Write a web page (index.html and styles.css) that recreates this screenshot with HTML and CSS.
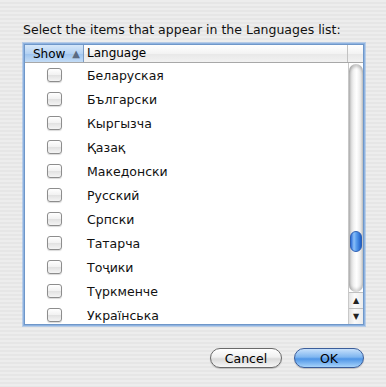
FILE: index.html
```html
<!DOCTYPE html>
<html lang="ru">
  <head>
    <meta charset="UTF-8" />
    <meta name="viewport" content="width=device-width, initial-scale=1.0" />
    <title>Languages</title>
    <link rel="stylesheet" href="styles.css">
  </head>
  <body>
    <div class="dialog">
      <p class="prompt">Select the items that appear in the Languages list:</p>

      <div class="table">
        <div class="table-head">
          <div class="col-show sorted">Show <span class="sort-arrow">▲</span></div>
          <div class="col-lang">Language</div>
          <div class="col-corner"></div>
        </div>

        <div class="table-body">
          <ul class="rows">
            <li><span class="check"></span><span class="name">Беларуская</span></li>
            <li><span class="check"></span><span class="name">Български</span></li>
            <li><span class="check"></span><span class="name">Кыргызча</span></li>
            <li><span class="check"></span><span class="name">Қазақ</span></li>
            <li><span class="check"></span><span class="name">Македонски</span></li>
            <li><span class="check"></span><span class="name">Русский</span></li>
            <li><span class="check"></span><span class="name">Српски</span></li>
            <li><span class="check"></span><span class="name">Татарча</span></li>
            <li><span class="check"></span><span class="name">Тоҷики</span></li>
            <li><span class="check"></span><span class="name">Түркменче</span></li>
            <li><span class="check"></span><span class="name">Українська</span></li>
          </ul>

          <div class="scrollbar">
            <div class="track">
              <div class="thumb"></div>
            </div>
            <div class="step up">▲</div>
            <div class="step down">▼</div>
          </div>
        </div>
      </div>

      <div class="buttons">
        <button class="btn">Cancel</button>
        <button class="btn default">OK</button>
      </div>
    </div>
  </body>
</html>
```

FILE: styles.css
```css
body {
  margin: 0;
  width: 386px;
  height: 387px;
  overflow: hidden;
  font-family: "DejaVu Sans", "Liberation Sans", sans-serif;
  font-size: 12px;
  color: #000;
  background: repeating-linear-gradient(
    to bottom,
    #ededed 0,
    #ededed 2px,
    #e6e6e6 2px,
    #e6e6e6 4px
  );
}

.dialog {
  padding: 22px 22px 0 24px;
}

.prompt {
  margin: 0 0 6px -1px;
  height: 16px;
  line-height: 16px;
  font-size: 12.5px;
  color: #111;
}

/* table view */

.table {
  width: 340px;
  height: 281px;
  background: #fff;
  border: 1px solid #6f97c9;
  box-shadow: 0 0 0 1px #8fb3e0, 0 0 0 2px rgba(150, 185, 230, 0.6);
  box-sizing: border-box;
  display: flex;
  flex-direction: column;
}

.table-head {
  display: flex;
  height: 17px;
  border-bottom: 1px solid #a8a8a8;
  background: linear-gradient(#ffffff, #f3f3f3 50%, #e8e8e8 51%, #f2f2f2);
  flex: none;
}

.table-head > div {
  line-height: 17px;
  box-sizing: border-box;
  border-right: 1px solid #c2c2c2;
}

.col-show {
  width: 59px;
  padding-left: 8px;
}

.col-show.sorted {
  background: linear-gradient(#d6e7f9, #b4d2f3 50%, #9dc3ee 51%, #c3dcf6);
  border-right-color: #7c9cc4;
}

.sort-arrow {
  font-size: 10px;
  color: #5b6b82;
  margin-left: 3px;
  vertical-align: 1px;
}

.col-lang {
  flex: 1;
  padding-left: 3px;
}

.col-corner {
  width: 15px;
  border-right: none !important;
}

.table-body {
  flex: 1;
  display: flex;
  overflow: hidden;
}

.rows {
  flex: 1;
  margin: 0;
  padding: 0;
  list-style: none;
}

.rows li {
  display: flex;
  align-items: center;
  height: 24px;
}

.check {
  width: 13px;
  height: 12px;
  margin: 0 25px 0 22px;
  border: 1px solid #8d8d8d;
  border-radius: 3px;
  background: linear-gradient(#ffffff, #f1f1f1 50%, #e1e1e1 51%, #f4f4f4);
  box-shadow: 0 1px 1px rgba(0, 0, 0, 0.15);
}

.name {
  font-size: 12.5px;
  color: #111;
}

/* scrollbar */

.scrollbar {
  width: 15px;
  display: flex;
  flex-direction: column;
  border-left: 1px solid #c8c8c8;
  box-sizing: border-box;
  background: #fff;
}

.track {
  flex: 1;
  position: relative;
  margin-top: 1px;
  border-radius: 7px;
  background: linear-gradient(to right, #c9c9c9, #f4f4f4 35%, #ffffff 55%, #dcdcdc);
  box-shadow: inset 0 3px 3px rgba(0, 0, 0, 0.2), inset 0 -3px 3px rgba(0, 0, 0, 0.15);
}

.thumb {
  position: absolute;
  left: 1px;
  right: 1px;
  top: 167px;
  height: 21px;
  border-radius: 6px;
  border: 1px solid #2d5fb3;
  box-sizing: border-box;
  background: linear-gradient(to right, #2f6fd8, #8cc0f8 30%, #5da2f0 50%, #1e5fc8);
}

.step {
  height: 15px;
  font-size: 8px;
  line-height: 15px;
  text-align: center;
  color: #222;
  background: linear-gradient(to right, #e4e4e4, #fafafa 40%, #ececec);
  border-top: 1px solid #c0c0c0;
}

/* buttons */

.buttons {
  display: flex;
  justify-content: flex-end;
  gap: 12px;
  margin-top: 23px;
}

.btn {
  height: 20px;
  width: 72px;
  padding: 0;
  border: 1px solid #6a6a6a;
  border-radius: 10px;
  font-family: "DejaVu Sans", "Liberation Sans", sans-serif;
  font-size: 12.5px;
  color: #000;
  background: linear-gradient(#ffffff, #f0f0f0 45%, #dadada 55%, #f6f6f6);
  box-shadow: 0 1px 1px rgba(0, 0, 0, 0.2);
}

.btn.default {
  width: 70px;
  border-color: #3b5d9a;
  background: linear-gradient(#c6e0fb, #7fb6f0 45%, #4f95e6 55%, #a6d3fb);
}
```
